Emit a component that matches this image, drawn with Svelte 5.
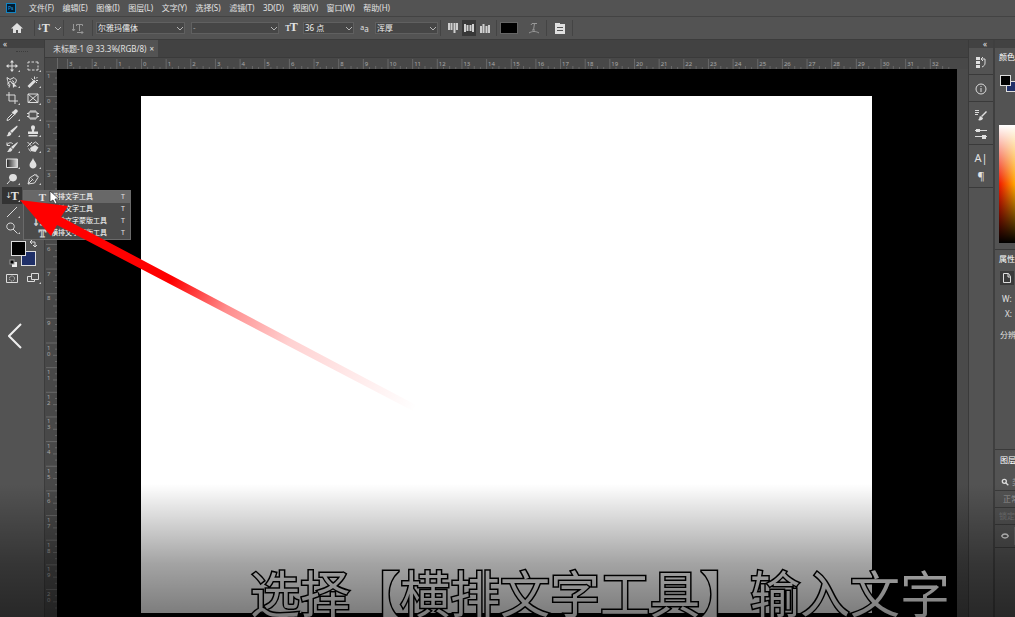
<script lang="ts">
  const menus = ['文件(F)', '编辑(E)', '图像(I)', '图层(L)', '文字(Y)', '选择(S)', '滤镜(T)', '3D(D)', '视图(V)', '窗口(W)', '帮助(H)'];

  // distance in px between two whole ruler units at 33.3%
  const unit = 24.65;
  const hMarks = Array.from({ length: 36 }, (_, i) => i - 3);
  const vMarks = Array.from({ length: 22 }, (_, i) => i - 1);

  const flyout = [
    { label: '横排文字工具', icon: 'T' },
    { label: '直排文字工具', icon: '↓T' },
    { label: '直排文字蒙版工具', icon: '↓T' },
    { label: '横排文字蒙版工具', icon: 'T' }
  ];

  // 24 x 24 glyphs, stroke = s, fill = f
  const tools = [
    { name: '移动工具', s: 'M12 2v20M2 12h20', f: 'M12 0l4 5H8zM12 24l4-5H8zM0 12l5-4v8zM24 12l-5-4v8z' },
    { name: '矩形选框工具', s: 'M2 7V4h4M9 4h5M17 4h5v4M22 11v4M22 17v3h-4M15 20h-5M7 20H2v-3M2 14v-4', f: '' },
    { name: '套索工具', s: 'M6 20C1 17 6 14 3 9L2 3l6 4 8-4 5 5-2 6-7 1-3-5-5 4 4 3-2 6M12 9l4 3', f: 'M13 12l9 9-5 0-3 3z' },
    { name: '快速选择工具', s: 'M15 1v5M22 9h-4M9 5l3 3M21 2l-3 3M20 14l-2-2', f: 'M14 7l4 4L5 24l-4-4z' },
    { name: '裁剪工具', s: 'M6 0v18h18M0 6h18v18', f: '' },
    { name: '图框工具', s: 'M2 4h20v17H2zM2 4l20 17M22 4L2 21', f: '' },
    { name: '吸管工具', s: 'M13 9L3 19l-1 4 4-1 10-10', f: 'M11 6l3-1 4-4c3-2 7 2 5 5l-4 4-1 3z' },
    { name: '修补工具', s: 'M4 6h16v12H4zM8 2v4M12 2v4M16 2v4M8 18v4M12 18v4M16 18v4M0 9h4M0 15h4M20 9h4M20 15h4', f: '' },
    { name: '画笔工具', s: '', f: 'M22 1c2 1 1 3 0 4L12 16l-4-4zM7 13l4 4c-1 5-6 6-10 5 4-2 2-7 6-9z' },
    { name: '仿制图章工具', s: '', f: 'M8 5c0-6 8-6 8 0 0 3-2 4-2 8h8v5H2v-5h8c0-4-2-5-2-8zM3 20h18v3H3z' },
    { name: '历史记录画笔工具', s: 'M2 3v6h6M2 8c2-5 9-6 12-2', f: 'M23 2c1 1 0 3-1 4l-8 10-4-4zM9 13l4 4c-2 5-7 5-11 5 4-3 3-7 7-9z' },
    { name: '橡皮擦工具', s: 'M1 2l9 9M10 2L1 11M11 6l6-4 6 5M3 15l4 6', f: 'M16 8l7 5-6 9-9-2-2-6z' },
    { name: '渐变工具', s: 'M1 4h22v17H1z', f: 'grad' },
    { name: '模糊工具', s: '', f: 'M12 2c1 5 7 9 7 14 0 9-14 9-14 0 0-5 6-9 7-14z' },
    { name: '减淡工具', s: 'M10 13L2 22', f: 'M14 2c11 0 10 15 0 15S3 2 14 2z' },
    { name: '钢笔工具', s: 'M2 22l3-12 11-7 6 6-7 11zM2 22l9-9M9 11l4 4M17 2l6 6', f: '' },
    { name: '文字工具', s: '', f: '' },
    { name: '', s: '', f: '' },
    { name: '直线工具', s: 'M2 22L22 2', f: '' },
    { name: '', s: '', f: '' },
    { name: '缩放工具', s: 'M9 2c10 0 10 14 0 14S-1 2 9 2zM14 14l9 9', f: '' }
  ];
</script>

{#snippet chevron()}
  <svg class="chevron" viewBox="0 0 8 8"><path d="M1 3l3 3 3-3" /></svg>
{/snippet}

{#snippet typeIcon()}
  <span class="type-icon">↓<b>T</b></span>
{/snippet}

<div class="editor">
  <nav class="menubar">
    <svg class="logo" viewBox="0 0 10 10"><rect x="0.5" y="0.5" width="9" height="9" fill="#001d33" stroke="#1184c4" /><text x="2" y="7">Ps</text></svg>
    <div class="menus">
      {#each menus as m}
        <button>{m}</button>
      {/each}
    </div>
  </nav>

  <div class="options">
    <div class="cell">
      <button aria-label="主页"><svg class="icon" viewBox="0 0 12 12"><path class="fill" d="M6 1L0 6.500h2V11h3V8h2v3h3V6.500h2z" /></svg></button>
    </div>
    <div class="cell line">
      <button class="pick" aria-label="工具预设">{@render typeIcon()}{@render chevron()}</button>
    </div>
    <div class="cell line">
      <button class="dim" aria-label="切换文本取向"><svg class="icon" viewBox="0 0 12 12"><path class="stroke" d="M1.500 2v7M0 7l1.500 2L3 7M4.500 4V2.500h6V4M7.500 2v7M5 10.500h6M9.500 9l1.500 1.500L9.500 12" /></svg></button>
    </div>
    <div class="cell line">
      <label class="drop"><select aria-label="字体"><option>尔雅玛儒体</option></select>{@render chevron()}</label>
    </div>
    <div class="cell">
      <label class="drop"><select class="muted" aria-label="字体样式"><option>-</option></select>{@render chevron()}</label>
    </div>
    <div class="cell"><span class="size-icon"><b>T</b><b class="big">T</b></span></div>
    <div class="cell tight">
      <label class="drop"><select aria-label="字号"><option>36 点</option></select>{@render chevron()}</label>
    </div>
    <div class="cell"><span class="aa"><small>a</small>a</span></div>
    <div class="cell tight">
      <label class="drop"><select aria-label="消除锯齿"><option>浑厚</option></select>{@render chevron()}</label>
    </div>
    <div class="cell line aligns">
      <button aria-label="顶对齐"><svg class="icon" viewBox="0 0 12 12"><path class="bars" d="M2 1v7M4.500 1v7M7.500 1v10M10 1v7" /></svg></button>
      <button class="on" aria-label="居中对齐"><svg class="icon" viewBox="0 0 12 12"><path class="bars" d="M2 2v8M4.500 3v6M7.500 3v6M10 2v8" /></svg></button>
      <button aria-label="底对齐"><svg class="icon" viewBox="0 0 12 12"><path class="bars" d="M2 4v7M4.500 2v9M7.500 4v7M10 3v8" /></svg></button>
    </div>
    <div class="cell line"><button class="text-color" aria-label="文本颜色"></button></div>
    <div class="cell">
      <button class="dim" aria-label="文字变形"><svg class="icon" viewBox="0 0 12 12"><path class="stroke" d="M3 3l1-1.500h5M6.500 1.500L5.500 8M4 8h3M1 11c3-2 7-2 10 0" /></svg></button>
    </div>
    <div class="cell line">
      <button aria-label="字符面板"><svg class="icon" viewBox="0 0 12 12"><path class="fill" d="M1 1h5v1h5v10H1z" /><path d="M3 5.500h6M3 8.500h6" stroke="#535353" /></svg></button>
    </div>
    <div class="cell line"></div>
  </div>

  <div class="workspace">
    <aside class="toolbar">
      <div class="strip">«</div>
      <div class="grip"></div>
      <div class="tools">
        {#each tools as t}
          {#if t.name}
            <button class:active={t.name === '文字工具'} aria-label={t.name} title={t.name}>
              {#if t.name === '文字工具'}
                {@render typeIcon()}
              {:else}
                <svg viewBox="0 0 24 24">
                  {#if t.f === 'grad'}
                    <defs><linearGradient id="ramp"><stop offset="0" stop-color="#222" /><stop offset="1" stop-color="#ddd" /></linearGradient></defs>
                    <rect x="1" y="4" width="22" height="17" fill="url(#ramp)" />
                  {:else if t.f}
                    <path class="fill" d={t.f} />
                  {/if}
                  {#if t.s}<path class="thick" d={t.s} />{/if}
                </svg>
              {/if}
              <i></i>
            </button>
          {:else}
            <span></span>
          {/if}
        {/each}
      </div>
      <svg class="swatches" viewBox="0 0 44 32">
        <rect x="21.500" y="13.500" width="14" height="14" fill="#203068" stroke="#ddd" />
        <rect x="11.500" y="3.500" width="14" height="14" fill="#000" stroke="#ddd" />
        <path class="stroke" d="M31 4h4v5M32 2l-2 2 2 2M33 7l2 2 2-2" />
        <rect x="12.500" y="24.500" width="4" height="4" fill="#eee" stroke="#eee" />
        <rect x="10" y="22" width="4" height="4" fill="#000" stroke="#999" />
      </svg>
      <div class="modes">
        <button aria-label="快速蒙版"><svg viewBox="0 0 12 12"><path class="stroke" d="M0.500 2.500h11v8h-11z" /><circle class="dots" cx="6" cy="6.500" r="2.500" /></svg></button>
        <button aria-label="屏幕模式"><svg viewBox="0 0 12 12"><path class="stroke" d="M4.500 1.500h7v6h-7zM4 4.500H0.500v5h7V8" /></svg><i></i></button>
      </div>
      <button class="back" aria-label="返回"><svg viewBox="0 0 14 26"><path d="M13 1L1 13l12 12" /></svg></button>
    </aside>

    <main class="document">
      <div class="tabs"><div class="tab">未标题-1 @ 33.3%(RGB/8) <button aria-label="关闭">×</button></div></div>
      <svg class="ruler-h">
        {#each hMarks as n}
          <path d="M{96.5 + n * unit} 1v10M{96.5 + (n + 0.5) * unit} 8v3M{96.5 + (n + 0.25) * unit} 9v2M{96.5 + (n + 0.75) * unit} 9v2" />
          <text x={98 + n * unit} y="8">{Math.abs(n)}</text>
        {/each}
        <path d="M12.500 0v12" />
      </svg>
      <div class="view">
        <svg class="ruler-v">
          {#each vMarks as n}
            <path d="M1 {27.5 + n * unit}h11M8 {27.5 + (n + 0.5) * unit}h4M10 {27.5 + (n + 0.25) * unit}h2M10 {27.5 + (n + 0.75) * unit}h2" />
            {#each String(Math.abs(n)).split('') as d, k}
              <text x="2" y={34 + n * unit + k * 6}>{d}</text>
            {/each}
          {/each}
        </svg>
        <div class="canvas"><div class="paper"></div></div>
      </div>
    </main>

    <aside class="dock">
      <div class="strip right">«</div>
      <div class="group">
        <button aria-label="历史记录"><svg viewBox="0 0 12 12"><path class="fill" d="M1 1h4v3H1zM1 5h4v3H1zM1 9h4v3H1z" /><path class="stroke" d="M7 3h3v4c0 2-1 3-3 4M8 1L6 3l2 2" /></svg></button>
      </div>
      <div class="group">
        <button aria-label="信息"><svg viewBox="0 0 12 12"><circle class="stroke" cx="6" cy="6" r="5" /><path class="stroke" d="M6 5v4M6 3v1" /></svg></button>
      </div>
      <div class="group tall">
        <button aria-label="画笔设置"><svg viewBox="0 0 12 12"><path class="fill" d="M11 2l1 1-5 5-1-1zM5 7l3 2c0 2-3 3-5 2 2-1 1-3 2-4z" /><path class="stroke" d="M0 1.500h4M0 3.500h4M0 5.500h3" /></svg></button>
        <button aria-label="画笔"><svg viewBox="0 0 12 12"><path class="stroke" d="M0 3.500h12M0 9.500h12" /><path class="fill" d="M1 2h4v3H1zM7 8h4v4H7z" /></svg></button>
      </div>
      <div class="group tall">
        <button class="glyph">A|</button>
        <button class="glyph">¶</button>
      </div>
    </aside>

    <aside class="panels">
      <div class="strip"></div>
      <section class="color">
        <h2>颜色</h2>
        <svg class="pair" viewBox="0 0 24 20"><rect x="7.500" y="6.500" width="11" height="10" fill="#203068" stroke="#ddd" /><rect x="1.500" y="0.500" width="10" height="10" fill="#000" stroke="#ddd" /></svg>
        <div class="field"></div>
      </section>
      <section class="props">
        <h2>属性</h2>
        <div class="doc-icon"><svg viewBox="0 0 12 12"><path class="stroke" d="M2.500 1.500h5l2 3v6h-7zM7 2v3h3" /></svg></div>
        <p>W:</p>
        <p class="indent">X:</p>
        <p class="res">分辨率</p>
      </section>
      <section class="layers">
        <h2>图层</h2>
        <div class="row"><svg viewBox="0 0 12 12"><circle class="thick" cx="5" cy="5" r="3" /><path class="thick" d="M7 7l4 4" /></svg>类型</div>
        <div class="row mode">正常</div>
        <div class="row lock">锁定:</div>
        <div class="row layer"><svg viewBox="0 0 12 12"><path class="thick" d="M1 6c2-4 8-4 10 0-2 4-8 4-10 0z" /></svg><span class="thumb"></span></div>
      </section>
    </aside>
  </div>

  <ul class="flyout">
    {#each flyout as item, i}
      <li class:hover={i === 0}><b class:dotted={i > 1}>{item.icon}</b><span>{item.label}</span><kbd>T</kbd></li>
    {/each}
  </ul>

  <svg class="pointer" viewBox="0 0 420 420">
    <defs>
      <linearGradient id="tail" gradientUnits="userSpaceOnUse" x1="21" y1="201" x2="416" y2="409">
        <stop offset="0" stop-color="#f00" />
        <stop offset="0.38" stop-color="#f00" />
        <stop offset="0.52" stop-color="#f00" stop-opacity="0.45" />
        <stop offset="0.68" stop-color="#f00" stop-opacity="0.18" />
        <stop offset="0.85" stop-color="#f00" stop-opacity="0.08" />
        <stop offset="1" stop-color="#f00" stop-opacity="0" />
      </linearGradient>
    </defs>
    <path fill="url(#tail)" d="M20 200L68 206L61 217L416 405L413 411L57 225L51 236z" />
    <path d="M50 191v11l3-2 2 4 2-1-2-4h4z" fill="#fff" stroke="#222" stroke-width="0.7" />
  </svg>

  <p class="caption">选择【横排文字工具】输入文字</p>
  <div class="shade"></div>
</div>

<style>
  :global(body) {
    margin: 0;
    background: #000;
  }

  .editor {
    position: relative;
    height: 100vh;
    overflow: hidden;
    display: flex;
    flex-direction: column;
    background: #535353;
    color: #e2e2e2;
    font: 8px/12px "Noto Sans", "Noto Sans CJK SC", sans-serif;
  }

  button {
    padding: 0;
    border: 0;
    background: none;
    color: inherit;
    font: inherit;
    display: flex;
    align-items: center;
    justify-content: center;
  }

  svg {
    display: block;
    fill: none;
  }

  .fill {
    fill: #e0e0e0;
  }

  .stroke {
    stroke: #dcdcdc;
  }

  .thick {
    stroke: #dcdcdc;
    stroke-width: 2;
  }

  .bars {
    stroke: #cfcfcf;
    stroke-width: 2;
  }

  .menubar {
    flex: none;
    height: 16px;
    display: flex;
    align-items: center;
    gap: 13px;
    padding-left: 6px;
    border-bottom: 1px solid #434343;
  }

  .menus {
    flex: 0 1 361px;
    display: flex;
    justify-content: space-between;
  }

  .menus button {
    white-space: nowrap;
  }

  .logo {
    flex: none;
    width: 10px;
    height: 10px;
  }

  .logo text {
    font-size: 5px;
    fill: #2fa3e6;
  }

  .options {
    flex: none;
    height: 22px;
    display: grid;
    grid-template-columns: 34px 29px 29px 96px 94px 19px 55px 17px 67px 56px 25px 25px 26px 1fr;
    align-items: center;
    border-bottom: 1px solid #3c3c3c;
  }

  .cell {
    height: 16px;
    display: flex;
    align-items: center;
    justify-content: center;
    padding: 0 3px;
  }

  .cell.line {
    border-left: 1px solid #444;
  }

  .cell.tight {
    padding: 0 2px;
  }

  .icon {
    width: 12px;
    height: 12px;
  }

  .dim {
    opacity: 0.5;
  }

  .pick {
    gap: 4px;
  }

  .type-icon {
    display: flex;
    align-items: center;
    font: 8px/12px "DejaVu Sans", sans-serif;
  }

  .type-icon b {
    font: bold 12px/12px "Liberation Serif", serif;
    margin-left: -1px;
  }

  .size-icon {
    display: flex;
    align-items: baseline;
  }

  .size-icon b {
    font: bold 8px/12px "Liberation Serif", serif;
  }

  .size-icon .big {
    font-size: 12px;
    margin-left: -1px;
  }

  .aa small {
    font-size: 7px;
    vertical-align: 2px;
  }

  .chevron {
    width: 8px;
    height: 8px;
    stroke: #b5b5b5;
    flex: none;
  }

  .drop {
    flex: 1;
    min-width: 0;
    display: flex;
    align-items: center;
    height: 10px;
    border: 1px solid #606060;
    background: #464646;
  }

  select {
    appearance: none;
    flex: 1;
    min-width: 0;
    height: 10px;
    padding: 0 1px;
    border: 0;
    background: none;
    color: #eee;
    font: inherit;
    line-height: 10px;
  }

  .muted {
    color: #999;
  }

  .aligns {
    gap: 2px;
    padding: 0 2px;
  }

  .aligns button {
    width: 14px;
    height: 16px;
  }

  .aligns .on {
    background: #383838;
  }

  .text-color {
    width: 18px;
    height: 12px;
    background: #000;
    border: 1px solid #666;
  }

  .workspace {
    flex: 1;
    min-height: 0;
    display: flex;
  }

  .toolbar {
    flex: none;
    width: 44px;
    display: flex;
    flex-direction: column;
    border-right: 1px solid #3c3c3c;
  }

  .strip {
    flex: none;
    height: 8px;
    padding-left: 3px;
    background: #424242;
    line-height: 8px;
  }

  .strip.right {
    padding: 0 6px 0 0;
    text-align: right;
  }

  .grip {
    width: 12px;
    height: 1px;
    margin: 3px auto 5px;
    border-top: 1px dotted #3c3c3c;
  }

  .tools {
    height: 178px;
    display: grid;
    grid-template-columns: 20px 21px;
    grid-template-rows: repeat(11, 1fr);
    padding-left: 2px;
  }

  .tools button,
  .modes button {
    position: relative;
  }

  .tools svg,
  .modes svg {
    width: 12px;
    height: 12px;
  }

  .tools .active {
    background: #333;
  }

  i {
    position: absolute;
    right: 2px;
    bottom: 2px;
    border-left: 2px solid transparent;
    border-bottom: 2px solid #ccc;
  }

  .swatches {
    width: 44px;
    height: 32px;
    margin-top: 2px;
  }

  .modes {
    display: grid;
    grid-template-columns: 20px 21px;
    height: 16px;
    padding-left: 2px;
  }

  .back {
    width: 14px;
    margin: 37px 0 0 8px;
  }

  .dots {
    stroke: #dcdcdc;
    stroke-dasharray: 1 1;
  }

  .back svg {
    width: 14px;
    height: 26px;
    stroke: #eee;
    stroke-width: 2;
  }

  .document {
    flex: 1;
    min-width: 0;
    display: flex;
    flex-direction: column;
    background: #4a4a4a;
    border-right: 1px solid #3a3a3a;
  }

  .tabs {
    flex: none;
    height: 17px;
    display: flex;
    background: #424242;
    border-bottom: 1px solid #3a3a3a;
  }

  .tab {
    display: flex;
    align-items: center;
    gap: 3px;
    padding: 0 4px 0 8px;
    background: #535353;
    white-space: nowrap;
  }

  .ruler-h {
    flex: none;
    width: 100%;
    height: 11px;
  }

  .ruler-h,
  .ruler-v {
    background: #484848;
    stroke: #686868;
  }

  .ruler-h text,
  .ruler-v text {
    fill: #a8a8a8;
    stroke: none;
    font-size: 6px;
  }

  .view {
    flex: 1;
    min-height: 0;
    display: flex;
  }

  .ruler-v {
    flex: none;
    width: 12px;
    height: 100%;
  }

  .canvas {
    flex: 1;
    display: flex;
    margin-right: 11px;
    padding: 27px 85px 4px 84px;
    background: #000;
  }

  .paper {
    flex: 1;
    background: #fff;
  }

  .dock {
    flex: none;
    width: 24px;
    border-right: 2px solid #3f3f3f;
  }

  .group {
    height: 25px;
    display: flex;
    flex-direction: column;
    align-items: center;
    justify-content: center;
    gap: 6px;
    padding-top: 1px;
    border-bottom: 1px solid #3a3a3a;
  }

  .group.tall {
    height: 41px;
  }

  .group svg {
    width: 12px;
    height: 12px;
  }

  .glyph {
    font-size: 11px;
    line-height: 12px;
  }

  .panels {
    flex: none;
    width: 20px;
    display: flex;
    flex-direction: column;
    overflow: hidden;
    white-space: nowrap;
  }

  section {
    padding-left: 4px;
    border-bottom: 1px solid #3a3a3a;
  }

  h2,
  p {
    margin: 0;
    font-size: 8px;
    font-weight: 400;
    line-height: 12px;
  }

  h2 {
    padding-top: 3px;
    color: #fff;
  }

  .color {
    height: 201px;
  }

  .pair {
    width: 24px;
    height: 20px;
    margin-top: 12px;
  }

  .field {
    height: 118px;
    margin-top: 30px;
    background: linear-gradient(#fff, transparent 50%, #000), linear-gradient(90deg, #f01800, #ffa800);
  }

  .props {
    height: 199px;
  }

  .doc-icon {
    padding: 1px;
    margin: 6px 0 8px 1px;
    width: 12px;
    background: #3a3a3a;
  }

  .doc-icon svg {
    width: 12px;
    height: 12px;
  }

  .props p {
    padding: 0 0 3px 3px;
  }

  .props .indent {
    padding-left: 6px;
  }

  .props .res {
    padding: 6px 0 0 1px;
  }

  .layers {
    padding: 0;
    border: 0;
  }

  .layers h2 {
    padding: 4px 0 8px 5px;
  }

  .row {
    display: flex;
    align-items: center;
    gap: 3px;
    height: 16px;
    padding-left: 6px;
    border-bottom: 1px solid #3a3a3a;
    color: #999;
  }

  .row svg {
    width: 8px;
    height: 8px;
    flex: none;
  }

  .row.mode {
    padding-left: 8px;
  }

  .row.lock {
    padding-left: 4px;
    color: #777;
  }

  .row.layer {
    height: 22px;
  }

  .thumb {
    width: 10px;
    height: 18px;
    margin-left: 2px;
    background: #6a6a6a;
  }

  .flyout {
    position: absolute;
    top: 190px;
    left: 23px;
    width: 106px;
    margin: 0;
    padding: 0;
    list-style: none;
    background: #4b4b4b;
    border: 1px solid #6a6a6a;
    font-size: 7px;
  }

  .flyout li {
    display: flex;
    align-items: center;
    height: 12px;
  }

  .flyout .hover {
    background: #686868;
  }

  .flyout b {
    width: 22px;
    margin-right: 5px;
    text-align: right;
    font: bold 11px/12px "Liberation Serif", serif;
  }

  .flyout .dotted {
    color: #4b4b4b;
    -webkit-text-stroke: 1px #ccc;
  }

  .flyout span {
    flex: 1;
    color: #fff;
  }

  .flyout kbd {
    margin-right: 5px;
    font: inherit;
  }

  .pointer {
    position: absolute;
    top: 0;
    left: 0;
    width: 420px;
    height: 420px;
    pointer-events: none;
  }

  .caption {
    position: absolute;
    bottom: -2px;
    left: 250px;
    font-size: 50px;
    line-height: 50px;
    white-space: nowrap;
    color: #fff;
    -webkit-text-stroke: 3px #000;
    paint-order: stroke fill;
  }

  .shade {
    position: absolute;
    left: 0;
    right: 0;
    bottom: 0;
    height: 133px;
    background: linear-gradient(transparent, rgba(0, 0, 0, 0.36) 60%, rgba(0, 0, 0, 0.52));
    pointer-events: none;
  }
</style>
